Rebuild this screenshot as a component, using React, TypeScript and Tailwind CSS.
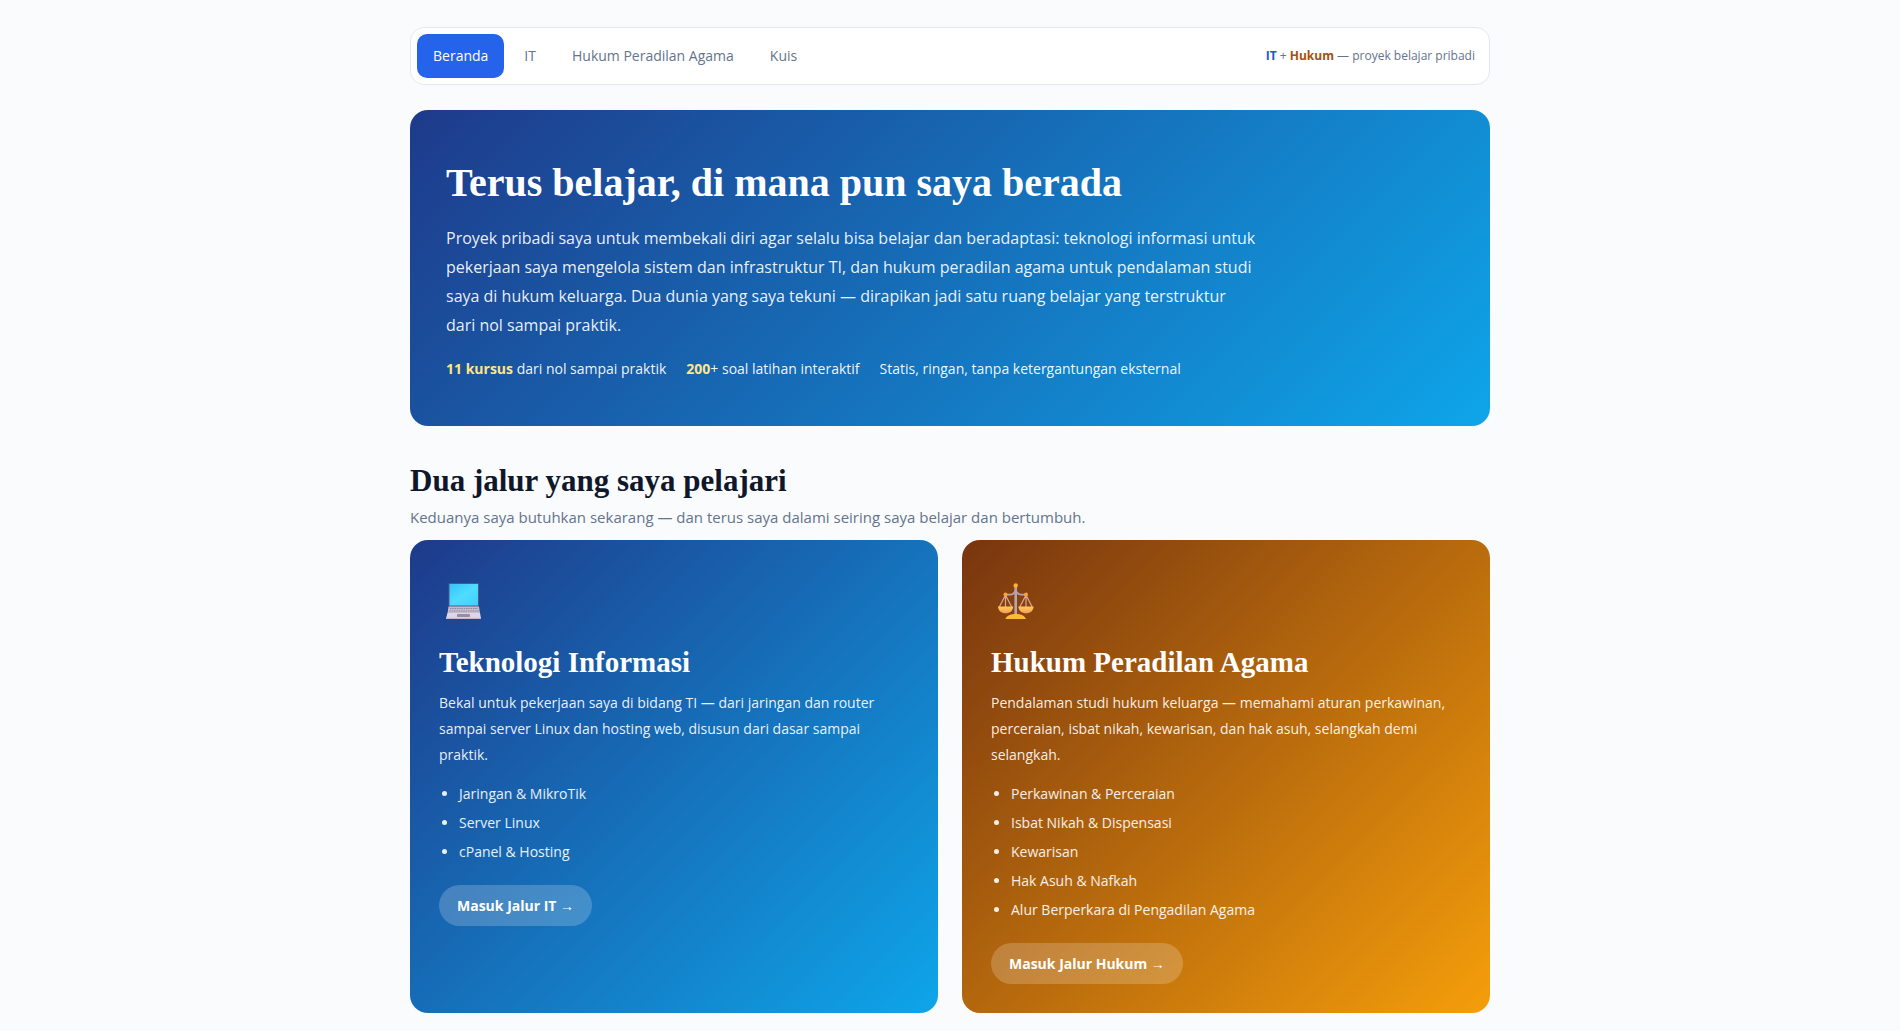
type NavItem = { label: string; href: string; active?: boolean };

const navItems: NavItem[] = [
  { label: "Beranda", href: "#beranda", active: true },
  { label: "IT", href: "#it" },
  { label: "Hukum Peradilan Agama", href: "#hukum" },
  { label: "Kuis", href: "#kuis" },
];

const LaptopIcon = () => (
  <svg className="mb-3 w-[50px] h-[62px]" viewBox="0 0 50 62" aria-hidden="true">
    <defs>
      <linearGradient id="screen" x1="0" y1="0" x2="1" y2="1">
        <stop offset="0" stopColor="#35c3fb" />
        <stop offset="0.5" stopColor="#4fdcff" />
        <stop offset="1" stopColor="#3fd0fb" />
      </linearGradient>
    </defs>
    <rect x="9.5" y="14" width="30.5" height="24" rx="1" fill="#4d5a86" />
    <rect x="10.5" y="15" width="28.5" height="21.5" fill="url(#screen)" />
    <path d="M9.5 37.5h30.5l1 7H8.5z" fill="#c3bccf" />
    <path d="M11 39.5h28M10.5 42h29" stroke="#8a8599" strokeWidth="1.2" strokeDasharray="1.4 0.9" />
    <path d="M8.5 44h32.5l1 5.2c0 .5-.3.8-.8.8H7.8c-.5 0-.8-.3-.8-.8z" fill="#dcd6e6" />
    <rect x="18" y="45" width="13" height="3" rx="0.4" fill="#958fa3" />
    <path d="M7 49.4h35" stroke="#bdb3cd" strokeWidth="1" />
  </svg>
);

const ScalesIcon = () => (
  <svg className="mb-3 w-[50px] h-[62px]" viewBox="0 0 50 62" aria-hidden="true">
    <defs>
      <linearGradient id="pan" x1="0" y1="0" x2="0" y2="1">
        <stop offset="0" stopColor="#ffcf4d" />
        <stop offset="1" stopColor="#f79a62" />
      </linearGradient>
    </defs>
    <path d="M24.7 17v29" stroke="#b9a5ae" strokeWidth="2.6" />
    <path
      d="M14.5 25.6h4.5c3 0 4.7-1.7 5.7-4.6 1 2.9 2.7 4.6 5.7 4.6h4.5"
      fill="none"
      stroke="#b3a2b4"
      strokeWidth="1.8"
    />
    <path
      d="M14.5 26L8.3 38M14.5 26v12M14.5 26l6.2 12M35 26l-6.2 12M35 26v12M35 26l6.2 12"
      fill="none"
      stroke="#dba79a"
      strokeWidth="1.2"
    />
    <path d="M7 37.4h15.2c-.2 4-3.2 6.8-7.6 6.8S7.2 41.4 7 37.4z" fill="url(#pan)" />
    <path d="M27.4 37.4h15.2c-.2 4-3.2 6.8-7.6 6.8s-7.4-2.8-7.6-6.8z" fill="url(#pan)" />
    <path d="M14.4 50c1.2-3.2 5-5 10.3-5s9.1 1.8 10.3 5z" fill="#fdb93c" />
    <circle cx="24.7" cy="16.5" r="2.2" fill="#fdb22f" />
    <circle cx="14.5" cy="25.6" r="2" fill="#f9a534" />
    <circle cx="35" cy="25.6" r="2" fill="#f9a534" />
  </svg>
);

const tracks = [
  {
    title: "Teknologi Informasi",
    text: "Bekal untuk pekerjaan saya di bidang TI — dari jaringan dan router sampai server Linux dan hosting web, disusun dari dasar sampai praktik.",
    topics: ["Jaringan & MikroTik", "Server Linux", "cPanel & Hosting"],
    cta: "Masuk Jalur IT →",
    href: "#it",
    Icon: LaptopIcon,
    background: "bg-[linear-gradient(135deg,#1e3a8a,#0ea5e9)]",
  },
  {
    title: "Hukum Peradilan Agama",
    text: "Pendalaman studi hukum keluarga — memahami aturan perkawinan, perceraian, isbat nikah, kewarisan, dan hak asuh, selangkah demi selangkah.",
    topics: [
      "Perkawinan & Perceraian",
      "Isbat Nikah & Dispensasi",
      "Kewarisan",
      "Hak Asuh & Nafkah",
      "Alur Berperkara di Pengadilan Agama",
    ],
    cta: "Masuk Jalur Hukum →",
    href: "#hukum",
    Icon: ScalesIcon,
    background: "bg-[linear-gradient(135deg,#78350f,#f59e0b)]",
  },
];

const NavBar = () => (
  <header className="flex flex-wrap items-center justify-between rounded-[14px] border border-slate-200 bg-white p-1.5">
    <nav className="flex flex-wrap gap-1">
      {navItems.map((item) => (
        <a
          key={item.label}
          href={item.href}
          aria-current={item.active ? "page" : undefined}
          className={`rounded-[10px] px-4 py-2.5 text-sm leading-6 font-medium ${
            item.active ? "bg-[#2563eb] text-white" : "text-[#64748b]"
          }`}
        >
          {item.label}
        </a>
      ))}
    </nav>
    <p className="px-2 text-xs leading-6 text-[#64748b]">
      <strong className="text-[#2258c0]">IT</strong> + <strong className="text-[#a8500c]">Hukum</strong> — proyek
      belajar pribadi
    </p>
  </header>
);

const Hero = () => (
  <section className="mt-[25px] rounded-[18px] bg-[linear-gradient(135deg,#1e3a8a,#0ea5e9)] px-9 pt-12 pb-[45px] text-white">
    <h1 className="font-['Liberation_Serif',serif] text-[40px] leading-[50px] font-bold">
      Terus belajar, di mana pun saya berada
    </h1>
    <p className="mt-4 max-w-[812px] text-base leading-[29px] text-white/92">
      Proyek pribadi saya untuk membekali diri agar selalu bisa belajar dan beradaptasi: teknologi informasi untuk
      pekerjaan saya mengelola sistem dan infrastruktur TI, dan hukum peradilan agama untuk pendalaman studi saya di
      hukum keluarga. Dua dunia yang saya tekuni — dirapikan jadi satu ruang belajar yang terstruktur dari nol sampai
      praktik.
    </p>
    <div className="mt-[17px] flex flex-wrap gap-x-5 text-sm leading-6 text-white/95">
      <span>
        <strong className="text-[#fde68a]">11 kursus</strong> dari nol sampai praktik
      </span>
      <span>
        <strong className="text-[#fde68a]">200</strong>+ soal latihan interaktif
      </span>
      <span>Statis, ringan, tanpa ketergantungan eksternal</span>
    </div>
  </section>
);

const TrackCard = ({ title, text, topics, cta, href, Icon, background }: (typeof tracks)[number]) => (
  <article className={`rounded-[18px] p-[29px] text-white ${background}`}>
    <Icon />
    <h3 className="font-['Liberation_Serif',serif] text-[29px] leading-[38px] font-bold">{title}</h3>
    <p className="mt-[9px] text-sm leading-[26px] text-white/92">{text}</p>
    <ul className="mt-[13px] flex list-disc flex-col gap-1 pl-5 text-sm leading-[25px] text-white/90">
      {topics.map((topic) => (
        <li key={topic}>{topic}</li>
      ))}
    </ul>
    <a
      href={href}
      className="mt-[21px] inline-block rounded-full bg-white/20 px-[18px] py-2 text-sm leading-[25px] font-bold"
    >
      {cta}
    </a>
  </article>
);

export default function App() {
  return (
    <div className="min-h-screen bg-[#fafbfd] px-6 pt-[27px] pb-[18px] font-['Open_Sans','Noto_Sans',sans-serif] text-[#0f172a]">
      <main className="mx-auto max-w-[1080px]">
        <NavBar />
        <Hero />
        <section>
          <h2 className="mt-[34px] font-['Liberation_Serif',serif] text-[31px] leading-[42px] font-bold">
            Dua jalur yang saya pelajari
          </h2>
          <p className="mt-0.5 mb-2.5 text-[15px] leading-[26px] text-[#64748b]">
            Keduanya saya butuhkan sekarang — dan terus saya dalami seiring saya belajar dan bertumbuh.
          </p>
          <div className="grid gap-6 md:grid-cols-2">
            {tracks.map((track) => (
              <TrackCard key={track.title} {...track} />
            ))}
          </div>
        </section>
      </main>
    </div>
  );
}
